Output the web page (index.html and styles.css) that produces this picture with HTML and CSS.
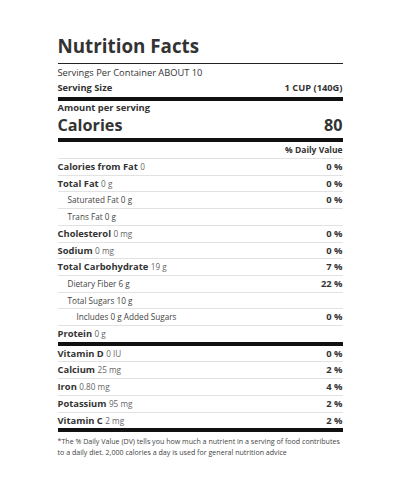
FILE: index.html
```html
<!DOCTYPE html>
<html lang="en">
<head>
    <meta charset="UTF-8">
    <meta name="viewport" content="width=device-width, initial-scale=1.0">
    <title>Nutrition Facts</title>
    <link rel="stylesheet" href="styles.css">
</head>
<body>

<div class="label">
    <h1 class="title">Nutrition Facts</h1>

    <div class="serving">
        <div class="serving-row">Servings Per Container ABOUT 10</div>
        <div class="serving-row strong">
            <span>Serving Size</span>
            <span>1 CUP (140G)</span>
        </div>
    </div>

    <div class="calories">
        <div class="amount">Amount per serving</div>
        <div class="calories-row">
            <span>Calories</span>
            <span>80</span>
        </div>
    </div>

    <div class="dv-head">% Daily Value</div>

    <div class="group">
        <div class="row"><span class="name">Calories from Fat <span class="qty">0</span></span><span class="pct">0 %</span></div>
        <div class="row"><span class="name">Total Fat <span class="qty">0 g</span></span><span class="pct">0 %</span></div>
        <div class="row sub"><span class="name">Saturated Fat 0 g</span><span class="pct">0 %</span></div>
        <div class="row sub"><span class="name">Trans Fat 0 g</span></div>
        <div class="row"><span class="name">Cholesterol <span class="qty">0 mg</span></span><span class="pct">0 %</span></div>
        <div class="row"><span class="name">Sodium <span class="qty">0 mg</span></span><span class="pct">0 %</span></div>
        <div class="row"><span class="name">Total Carbohydrate <span class="qty">19 g</span></span><span class="pct">7 %</span></div>
        <div class="row sub"><span class="name">Dietary Fiber 6 g</span><span class="pct">22 %</span></div>
        <div class="row sub"><span class="name">Total Sugars 10 g</span></div>
        <div class="row sub deep"><span class="name">Includes 0 g Added Sugars</span><span class="pct">0 %</span></div>
        <div class="row"><span class="name">Protein <span class="qty">0 g</span></span></div>
    </div>

    <div class="group">
        <div class="row"><span class="name">Vitamin D <span class="qty">0 IU</span></span><span class="pct">0 %</span></div>
        <div class="row"><span class="name">Calcium <span class="qty">25 mg</span></span><span class="pct">2 %</span></div>
        <div class="row"><span class="name">Iron <span class="qty">0.80 mg</span></span><span class="pct">4 %</span></div>
        <div class="row"><span class="name">Potassium <span class="qty">95 mg</span></span><span class="pct">2 %</span></div>
        <div class="row"><span class="name">Vitamin C <span class="qty">2 mg</span></span><span class="pct">2 %</span></div>
    </div>

    <p class="note">*The % Daily Value (DV) tells you how much a nutrient in a serving of food contributes to a daily diet. 2,000 calories a day is used for general nutrition advice</p>
</div>

</body>
</html>
```

FILE: styles.css
```css
body {
    font-family: 'Open Sans', sans-serif;
    margin: 0;
    padding: 0;
    background: #ffffff;
    color: #333333;
}

.label {
    width: 285px;
    margin: 0 auto;
    padding-top: 34px;
}

.title {
    margin: 0;
    padding-bottom: 5px;
    font-size: 18.8px;
    line-height: 24px;
    font-weight: 700;
    border-bottom: 1px solid #222222;
}

.serving {
    padding: 1px 0 2px;
    border-bottom: 4px solid #111111;
}

.serving-row {
    font-size: 9.3px;
    line-height: 15px;
}

.serving-row.strong {
    display: flex;
    justify-content: space-between;
    font-weight: 700;
}

.calories {
    padding-top: 2px;
    border-bottom: 4px solid #111111;
}

.amount {
    font-size: 9.4px;
    line-height: 10px;
    font-weight: 700;
}

.calories-row {
    display: flex;
    justify-content: space-between;
    font-size: 16.2px;
    line-height: 25px;
    font-weight: 700;
}

.dv-head {
    text-align: right;
    font-size: 8.5px;
    line-height: 16px;
    font-weight: 700;
    border-bottom: 1px solid #e2e2e2;
}

.group {
    border-bottom: 4px solid #111111;
}

.row {
    display: flex;
    justify-content: space-between;
    align-items: baseline;
    line-height: 15.7px;
    font-size: 9.4px;
    border-bottom: 1px solid #e2e2e2;
}

.row:last-child {
    border-bottom: none;
}

.name {
    font-weight: 700;
}

.qty {
    font-size: 8.2px;
    font-weight: 400;
    color: #666666;
}

.pct {
    font-weight: 700;
}

.sub .name {
    padding-left: 10px;
    font-size: 8.2px;
    font-weight: 400;
    color: #444444;
}

.deep .name {
    padding-left: 19px;
}

.note {
    margin: 0;
    padding-top: 4px;
    font-size: 7.1px;
    line-height: 10.5px;
    color: #444444;
}
```
